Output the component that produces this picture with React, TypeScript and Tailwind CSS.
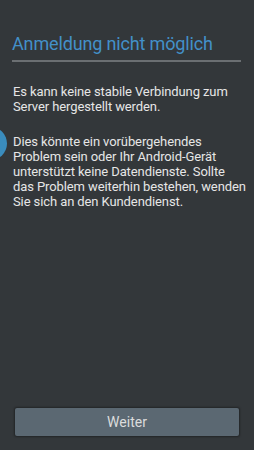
export default function App() {
  return (
    <div className="relative w-[254px] h-[450px] overflow-hidden bg-[#33373a] flex flex-col font-['Roboto',sans-serif]">
      {/* half circle peeking in from the left */}
      <div className="absolute left-[-28px] top-[127px] w-[35px] h-[33px] rounded-full bg-[#3a8cbd]" />

      <div className="px-[12px] pt-[33px]">
        <h1 className="text-[18px] leading-[22px] text-[#4390c9] tracking-[-0.15px]">Anmeldung nicht möglich</h1>
        <div className="mt-[5px] h-[2px] bg-[#6b6f72] w-[229px]" />
      </div>

      <div className="pl-[13px] pr-[4px] pt-[22px] text-[13px] leading-[15px] text-[#e6e6e6] tracking-[-0.1px] whitespace-nowrap">
        <p>
          Es kann keine stabile Verbindung zum
          <br />
          Server hergestellt werden.
        </p>
        <p className="mt-[20px]">
          Dies könnte ein vorübergehendes
          <br />
          Problem sein oder Ihr Android-Gerät
          <br />
          unterstützt keine Datendienste. Sollte
          <br />
          das Problem weiterhin bestehen, wenden
          <br />
          Sie sich an den Kundendienst.
        </p>
      </div>

      <div className="mt-auto px-[15px] pb-[14px]">
        <button className="w-full h-[28px] bg-[#5b6872] text-[#dcdcdc] text-[14px] rounded-[2px] shadow-[0_0_2px_1px_rgba(0,0,0,0.35)]">
          Weiter
        </button>
      </div>
    </div>
  )
}
